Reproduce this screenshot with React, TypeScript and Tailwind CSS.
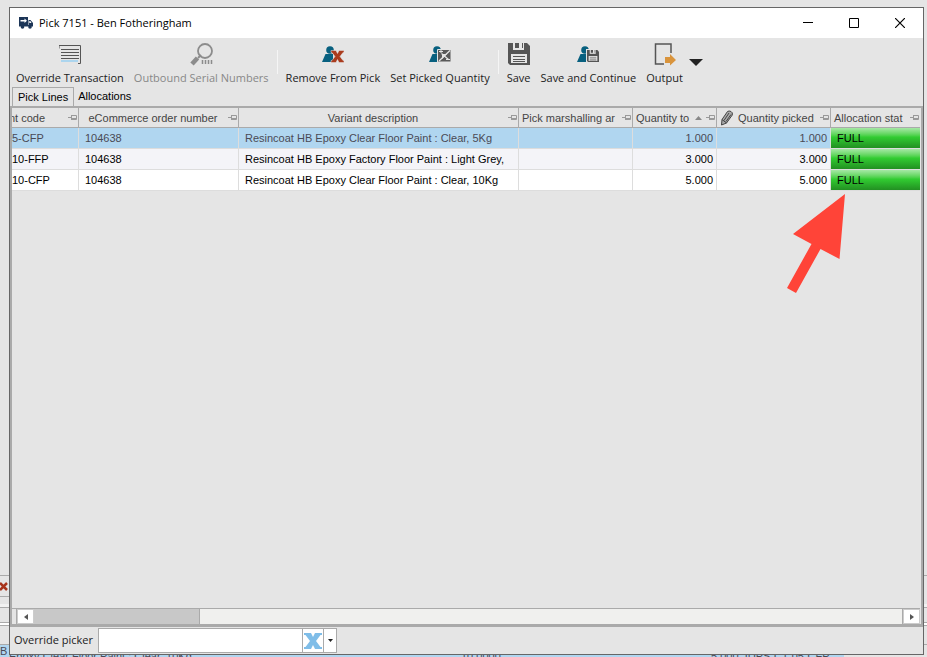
import type { ReactNode } from 'react';

type Line = { code: string; order: string; desc: string; area: string; toPick: string; picked: string; status: string };

const LINES: Line[] = [
  { code: '5-CFP', order: '104638', desc: 'Resincoat HB Epoxy Clear Floor Paint : Clear, 5Kg', area: '', toPick: '1.000', picked: '1.000', status: 'FULL' },
  { code: '10-FFP', order: '104638', desc: 'Resincoat HB Epoxy Factory Floor Paint : Light Grey,', area: '', toPick: '3.000', picked: '3.000', status: 'FULL' },
  { code: '10-CFP', order: '104638', desc: 'Resincoat HB Epoxy Clear Floor Paint : Clear, 10Kg', area: '', toPick: '5.000', picked: '5.000', status: 'FULL' },
];

const ROW_BG = ['bg-[#b0d6f0] text-[#4a4a55]', 'bg-[#f4f4f8] text-black', 'bg-white text-black'];

export default function App() {
  return (
    <div className="relative h-screen overflow-hidden bg-[#e5e5e5] pt-[7px] pr-[3px] pb-[2px] pl-[9px] font-['Open_Sans',sans-serif] text-[11px] text-[#222]">
      <Backdrop />
      <main className="relative flex h-full flex-col border border-[#666] bg-[#e5e5e5]">
        <TitleBar />
        <Toolbar />
        <Tabs />
        <section className="relative flex min-h-0 flex-1 flex-col border-2 border-b-3 border-[#aaa] pr-px">
          <Grid />
          <div className="flex-1" />
          <ScrollBar />
          <Arrow />
        </section>
        <Footer />
      </main>
    </div>
  );
}

// slivers of the parent window that show round the dialog
function Backdrop() {
  return (
    <div aria-hidden="true" className="absolute inset-x-0 bottom-0 flex h-[82px] flex-col overflow-hidden border-t border-[#aaa] font-['Liberation_Sans',Arial,sans-serif]">
      <div className="flex h-5 items-center">
        <svg width="8" height="9" stroke="#a8341c" strokeWidth="2.500"><path d="M0 1l7 7M7 1L0 8" /></svg>
      </div>
      <div className="h-2 w-[9px] border-t border-[#aaa] bg-[#e5e5e5]" />
      <div className="h-[3px] bg-[#f2f2f2]" />
      <div className="h-4 border-y border-[#aaa]" />
      <div className="h-[2px] bg-white" />
      <div className="h-5 border-y border-[#aaa]" />
      <div className="flex flex-1 items-end bg-linear-to-r from-[#b0d6f0] from-91% to-[#e5e5e5] to-91% text-[#4a4a55]">
        <span className="w-[9px] leading-3">B</span>
        <div className="flex h-[2px] flex-1 items-center overflow-hidden">
          <span className="w-[452px] whitespace-pre">Epoxy Clear Floor Paint : Clear, 10Kg</span>
          <span className="w-[250px]">10.0000</span>
          <span className="whitespace-pre">5.000  IDPS-C1-05-CFP</span>
        </div>
      </div>
    </div>
  );
}

function TitleBar() {
  return (
    <header className="flex h-[30px] shrink-0 items-center bg-white">
      <svg className="ml-[9px] h-3 w-[14px]" viewBox="0 0 14 12" fill="#1c3557">
        <path d="M0 0h9v8H0zM9.500 3h2L14 6v3H9.500zM0 8h14v1.500H0z" />
        <path d="M1.500 3h4V1.500L8 3.700 5.500 6V4.500h-4z" fill="#fff" />
        <path d="M10.300 4h1L12.500 6h-2.200z" fill="#fff" />
        <circle cx="3.500" cy="10" r="1.800" />
        <circle cx="11" cy="10" r="1.800" />
      </svg>
      <h1 className="ml-[6px] flex-1 text-[11px] text-black">Pick 7151 - Ben Fotheringham</h1>
      <button aria-label="Minimize" className="flex h-full w-[46px] items-center justify-center">
        <svg width="10" height="10" stroke="#000" fill="none"><path d="M0 4.500h10" /></svg>
      </button>
      <button aria-label="Maximize" className="flex h-full w-[46px] items-center justify-center">
        <svg width="10" height="10" stroke="#000" fill="none"><path d="M.5.5h9v9h-9z" /></svg>
      </button>
      <button aria-label="Close" className="flex h-full w-[46px] items-center justify-center">
        <svg width="10" height="10" stroke="#000" strokeWidth="1.200" fill="none"><path d="M0 0l10 10M10 0L0 10" /></svg>
      </button>
    </header>
  );
}

function Tool({ label, icon, disabled }: { label: string; icon: ReactNode; disabled?: boolean }) {
  return (
    <button disabled={disabled} className="flex flex-col items-center whitespace-nowrap disabled:text-[#888]">
      <span className="flex h-8 items-center">{icon}</span>
      <span className="leading-4">{label}</span>
    </button>
  );
}

function Toolbar() {
  return (
    <div role="toolbar" className="flex h-[49px] shrink-0 items-start pl-[6px]">
      <div className="flex gap-[10px]">
        <Tool label="Override Transaction" icon={<ListIcon />} />
        <Tool label="Outbound Serial Numbers" icon={<SerialIcon />} disabled />
      </div>
      <div className="mx-2 mt-3 h-6 w-px bg-[#f5f5f5]" />
      <div className="flex gap-[10px]">
        <Tool label="Remove From Pick" icon={<RemoveIcon />} />
        <Tool label="Set Picked Quantity" icon={<QuantityIcon />} />
      </div>
      <div className="mx-2 mt-3 h-6 w-px bg-[#f5f5f5]" />
      <div className="flex gap-[10px]">
        <Tool label="Save" icon={<SaveIcon />} />
        <Tool label="Save and Continue" icon={<SaveUserIcon />} />
        <Tool label="Output" icon={<OutputIcon />} />
      </div>
      <button aria-label="More output options" className="mt-[21px] ml-[6px]">
        <svg width="14" height="7" fill="#222"><path d="M0 0h14L7 7z" /></svg>
      </button>
    </div>
  );
}

function Tabs() {
  return (
    <div role="tablist" className="flex h-[19px] shrink-0 pl-[2px] font-['Liberation_Sans',Arial,sans-serif] text-[11px] text-black">
      <button role="tab" aria-selected="true" className="border border-b-0 border-[#aaa] px-[5px]">Pick Lines</button>
      <button role="tab" aria-selected="false" className="px-1">Allocations</button>
    </div>
  );
}

function Head({ label, children, left }: { label: string; children?: ReactNode; left?: boolean }) {
  return (
    <th className="h-5 border-r border-b border-[#aaa] p-0 font-normal last:border-r-0">
      <div className="flex items-center gap-1 pr-px pl-[3px] whitespace-nowrap">
        <span className={left ? 'flex-1 text-left' : 'flex-1 text-center'}>{label}</span>
        {children}
        <PinIcon />
      </div>
    </th>
  );
}

function Grid() {
  return (
    <table className="w-full table-fixed border-separate border-spacing-0 font-['Liberation_Sans',Arial,sans-serif] text-[11px]">
      <colgroup>
        <col className="w-[67px]" />
        <col className="w-[160px]" />
        <col />
        <col className="w-[114px]" />
        <col className="w-[84px]" />
        <col className="w-[114px]" />
        <col className="w-[89px]" />
      </colgroup>
      <thead className="leading-4 text-[#444]">
        <tr>
          <th className="h-5 overflow-hidden border-r border-b border-[#aaa] p-0 font-normal">
            <div className="-ml-[3px] flex items-center pr-px">
              <span className="flex-1 text-left">nt code</span>
              <PinIcon />
            </div>
          </th>
          <Head label="eCommerce order number" />
          <Head label="Variant description" />
          <Head label="Pick marshalling ar" left />
          <Head label="Quantity to" left>
            <svg width="7" height="4" fill="#888"><path d="M0 4h7L3.500 0z" /></svg>
          </Head>
          <th className="h-5 border-r border-b border-[#aaa] p-0 font-normal">
            <div className="flex items-center gap-[5px] pr-px pl-1 whitespace-nowrap">
              <ClipIcon />
              <span className="flex-1 text-left">Quantity picked</span>
              <PinIcon />
            </div>
          </th>
          <Head label="Allocation stat" left />
        </tr>
      </thead>
      <tbody>
        {LINES.map((l, i) => (
          <tr key={l.code} className={ROW_BG[i]}>
            <td className="h-[21px] border-r border-b border-[#ddd] p-0">{l.code}</td>
            <td className="border-r border-b border-[#ddd] p-0 pl-[6px]">{l.order}</td>
            <td className="overflow-hidden border-r border-b border-[#ddd] p-0 pl-[6px] whitespace-nowrap">{l.desc}</td>
            <td className="border-r border-b border-[#ddd] p-0">{l.area}</td>
            <td className="border-r border-b border-[#ddd] p-0 pr-[3px] text-right">{l.toPick}</td>
            <td className="border-r border-b border-[#ddd] p-0 pr-[3px] text-right">{l.picked}</td>
            <td className="border-b border-[#ddd] bg-linear-to-b from-[#a5e8a5] via-[#32cd32] via-45% to-[#229022] p-0 pl-[6px] text-black">{l.status}</td>
          </tr>
        ))}
      </tbody>
    </table>
  );
}

function ScrollBar() {
  return (
    <div className="flex h-4 shrink-0 border-t border-[#aaa] bg-[#c8c8c8]">
      <div className="w-[5px] border-r border-[#aaa] bg-[#e5e5e5]" />
      <button aria-label="Scroll left" className="flex w-[17px] items-center justify-center border border-[#ccc] bg-white">
        <svg width="4" height="6" fill="#555"><path d="M4 0v6L0 3z" /></svg>
      </button>
      <div className="w-[165px]" />
      <div className="flex-1 border-x border-[#aaa] bg-[#f0f0ee]" />
      <button aria-label="Scroll right" className="flex w-[17px] items-center justify-center border border-[#ccc] bg-white">
        <svg width="4" height="6" fill="#555"><path d="M0 0v6l4-3z" /></svg>
      </button>
    </div>
  );
}

function Footer() {
  return (
    <footer className="flex h-[27px] shrink-0 items-center pl-1">
      <label htmlFor="picker" className="w-[84px] whitespace-nowrap">Override picker</label>
      <div className="flex h-[25px] border border-[#aaa] bg-white">
        <input id="picker" type="text" className="w-[203px] px-1 outline-none" />
        <button aria-label="Clear picker" className="flex w-[22px] items-center justify-center border-x border-[#aaa]">
          <svg width="18" height="16" viewBox="0 0 18 16" fill="#7fbde8">
            <path d="M0 0h7l2 4 2-4h7v2h-1.500L12 8l4.500 6H18v2h-7l-2-4-2 4H0v-2h1.500L6 8 1.500 2H0z" />
          </svg>
        </button>
        <button aria-label="Open picker list" className="flex w-3 items-center justify-center">
          <svg width="5" height="3" fill="#222"><path d="M0 0h5L2.500 3z" /></svg>
        </button>
      </div>
    </footer>
  );
}

// annotation pointing at the allocation status column
function Arrow() {
  return (
    <svg className="absolute top-[86px] right-[74px]" width="60" height="100" viewBox="0 0 60 100" fill="#ff4438">
      <path d="M58 0L6 40l18.500 10L0 94l9 5 24.500-44L52.500 65z" />
    </svg>
  );
}

function PinIcon() {
  return (
    <svg className="shrink-0" width="9" height="7" fill="none" stroke="#999">
      <path d="M0 3.500h3M3.500 1v5M3.500 1.500h5v4h-5M4 4.500h4" />
    </svg>
  );
}

function ClipIcon() {
  return (
    <svg className="shrink-0" width="12" height="16" viewBox="0 0 12 16" fill="#aaa" stroke="#444" strokeLinejoin="round">
      <path d="M.5 15L1 9.500l5.500-8Q8 .5 10 1.500t1.300 3.500L5.500 13z" />
      <path d="M3 10.500l5-7.500M5 11.500l5-7M1 9.500L5.500 13" fill="none" />
    </svg>
  );
}

function ListIcon() {
  return (
    <svg width="22" height="19" fill="none" stroke="#555">
      <path d="M0 3.500V.5h21.500v18H19M2 4.500h18M2 7.500h18M2 10.500h18M2 13.500h18" />
      <path d="M2 16h17" stroke="#acd5ee" strokeWidth="2" />
    </svg>
  );
}

function SerialIcon() {
  return (
    <svg width="23" height="23" fill="none" stroke="#8c8c8c">
      <circle cx="15" cy="8" r="7" strokeWidth="1.800" />
      <path d="M7.500 15L2 21" strokeWidth="4.500" />
      <path d="M11 12L8 15" strokeWidth="2" />
      <path d="M12.500 17v5M15.500 17v5M18.500 17v5M21.500 17v5" strokeDasharray="4 1" strokeWidth="1.500" />
    </svg>
  );
}

function Person() {
  return (
    <g fill="#08607f">
      <circle cx="8" cy="4" r="3.800" />
      <path d="M3.500 8H11v8H0z" />
    </g>
  );
}

function RemoveIcon() {
  return (
    <svg width="22" height="17">
      <Person />
      <path d="M9 4.500h5l1.500 3 1.500-3h5v2h-1l-3 4 3 4h1v2h-5l-1.500-3-1.500 3H9v-2h1l3-4-3-4H9z" fill="#aa3c1e" stroke="#e5e5e5" strokeWidth=".5" />
    </svg>
  );
}

function QuantityIcon() {
  return (
    <svg width="22" height="17">
      <Person />
      <path d="M8.500 3.500H22V16H8.500z" fill="#595959" stroke="#e5e5e5" />
      <path d="M10 5.500h4M12 4v3M17 13.500h4" stroke="#e5e5e5" />
      <path d="M10 15L21 4.500M12.500 7.500l7 6" stroke="#e5e5e5" strokeWidth="1.300" />
      <path d="M13 8h5l-5 5z" fill="#e5e5e5" />
    </svg>
  );
}

function Disk() {
  return (
    <>
      <path d="M0 0h19l3 3v19H2l-2-2z" fill="#555" />
      <path d="M5 0h11v7H5z" fill="#e5e5e5" />
      <path d="M7 0h4v5H7zM14 0h1v5h-1z" fill="#555" />
      <path d="M3 11h16v9H3z" fill="#e5e5e5" />
      <path d="M5 13.500h12M5 16.500h12M5 18.500h12" stroke="#555" />
    </>
  );
}

function SaveIcon() {
  return <svg width="22" height="22"><Disk /></svg>;
}

function SaveUserIcon() {
  return (
    <svg width="22" height="17">
      <Person />
      <path d="M9 3h13v13H9z" fill="#e5e5e5" />
      <g transform="translate(10 4) scale(.545)"><Disk /></g>
    </svg>
  );
}

function OutputIcon() {
  return (
    <svg width="22" height="23" fill="none">
      <path d="M10 21H1.500V1H17v9" stroke="#555" strokeWidth="1.500" />
      <path d="M11 14h5v-3l6 6-6 5.500V20h-5z" fill="#d9943c" />
    </svg>
  );
}
